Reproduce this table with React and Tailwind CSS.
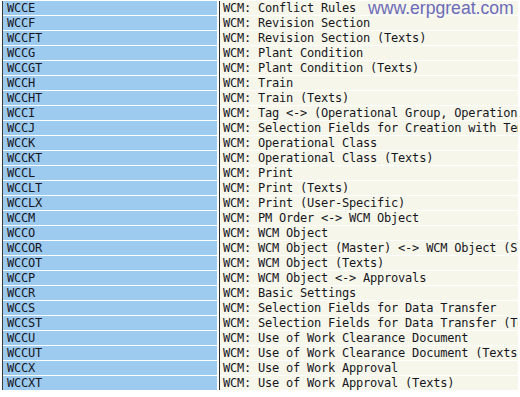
const rows = [
  ["WCCE", "WCM: Conflict Rules"],
  ["WCCF", "WCM: Revision Section"],
  ["WCCFT", "WCM: Revision Section (Texts)"],
  ["WCCG", "WCM: Plant Condition"],
  ["WCCGT", "WCM: Plant Condition (Texts)"],
  ["WCCH", "WCM: Train"],
  ["WCCHT", "WCM: Train (Texts)"],
  ["WCCI", "WCM: Tag <-> (Operational Group, Operational Cycle)"],
  ["WCCJ", "WCM: Selection Fields for Creation with Template"],
  ["WCCK", "WCM: Operational Class"],
  ["WCCKT", "WCM: Operational Class (Texts)"],
  ["WCCL", "WCM: Print"],
  ["WCCLT", "WCM: Print (Texts)"],
  ["WCCLX", "WCM: Print (User-Specific)"],
  ["WCCM", "WCM: PM Order <-> WCM Object"],
  ["WCCO", "WCM: WCM Object"],
  ["WCCOR", "WCM: WCM Object (Master) <-> WCM Object (Slave)"],
  ["WCCOT", "WCM: WCM Object (Texts)"],
  ["WCCP", "WCM: WCM Object <-> Approvals"],
  ["WCCR", "WCM: Basic Settings"],
  ["WCCS", "WCM: Selection Fields for Data Transfer"],
  ["WCCST", "WCM: Selection Fields for Data Transfer (Texts)"],
  ["WCCU", "WCM: Use of Work Clearance Document"],
  ["WCCUT", "WCM: Use of Work Clearance Document (Texts)"],
  ["WCCX", "WCM: Use of Work Approval"],
  ["WCCXT", "WCM: Use of Work Approval (Texts)"],
];

// SAP list font: fixed 7px advance
const mono =
  "font-['DejaVu_Sans_Mono',monospace] text-[12px] tracking-[-0.22px] leading-[14px] text-[#16161e] whitespace-pre";

export default function App() {
  return (
    <div className="relative h-[397px] w-[520px] overflow-hidden bg-white">
      <div className="flex pl-[2px] pr-[2px] pt-px">
        <div className="flex w-[215px] flex-col gap-px border-l border-[#3a3a3a]">
          {rows.map(([k]) => (
            <div key={k} className={`h-[14px] bg-[#9dcbef] pl-[4px] ${mono}`}>
              {k}
            </div>
          ))}
        </div>
        <div className="ml-[2px] flex min-w-0 flex-1 flex-col gap-px overflow-hidden border-l border-[#2a2a2a]">
          {rows.map(([k, v]) => (
            <div key={k} className={`h-[14px] overflow-hidden bg-[#f6f6ea] pl-[3px] ${mono}`}>
              {v}
            </div>
          ))}
        </div>
      </div>
      <div className="absolute left-[368px] top-[-2px] font-['Liberation_Sans',Arial,sans-serif] text-[17.6px] leading-[20px] text-[#6b6bb9]">
        www.erpgreat.com
      </div>
    </div>
  );
}
